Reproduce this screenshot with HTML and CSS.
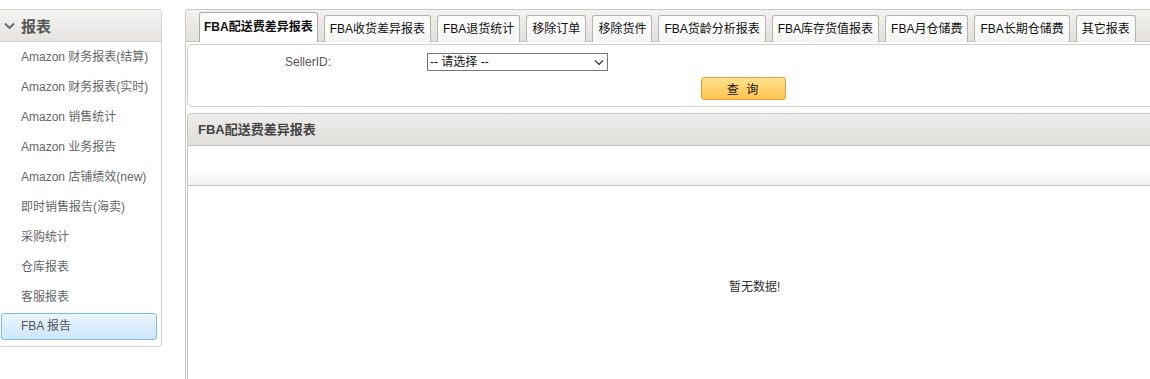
FILE: index.html
```html
<!DOCTYPE html>
<html lang="zh-CN">
<head>
    <meta charset="UTF-8">
    <meta name="viewport" content="width=device-width, initial-scale=1.0">
    <title>FBA 报告</title>
    <link rel="stylesheet" href="styles.css">
</head>
<body>
    <div class="page">
        <div class="sidebar">
            <div class="side-head">
                <svg class="chev" width="11" height="8" viewBox="0 0 11 8"><path d="M1 1.5 L5.5 6 L10 1.5" fill="none" stroke="#666" stroke-width="1.8"/></svg>
                <span>报表</span>
            </div>
            <ul class="side-menu">
                <li>Amazon 财务报表(结算)</li>
                <li>Amazon 财务报表(实时)</li>
                <li>Amazon 销售统计</li>
                <li>Amazon 业务报告</li>
                <li>Amazon 店铺绩效(new)</li>
                <li>即时销售报告(海卖)</li>
                <li>采购统计</li>
                <li>仓库报表</li>
                <li>客服报表</li>
                <li class="active">FBA 报告</li>
            </ul>
        </div>

        <div class="main">
            <div class="tabs">
                <div class="tab active">FBA配送费差异报表</div>
                <div class="tab">FBA收货差异报表</div>
                <div class="tab">FBA退货统计</div>
                <div class="tab">移除订单</div>
                <div class="tab">移除货件</div>
                <div class="tab">FBA货龄分析报表</div>
                <div class="tab">FBA库存货值报表</div>
                <div class="tab">FBA月仓储费</div>
                <div class="tab">FBA长期仓储费</div>
                <div class="tab">其它报表</div>
            </div>

            <div class="body">
                <div class="search">
                    <div class="search-row">
                        <label for="seller">SellerID:</label>
                        <div class="select-wrap">
                            <select id="seller">
                                <option>-- 请选择 --</option>
                            </select>
                            <svg class="select-arrow" width="10" height="7" viewBox="0 0 10 7"><path d="M1 1.5 L5 5.5 L9 1.5" fill="none" stroke="#333" stroke-width="1.2"/></svg>
                        </div>
                    </div>
                    <div class="search-btn">
                        <button>查 询</button>
                    </div>
                </div>

                <div class="list">
                    <div class="list-head">FBA配送费差异报表</div>
                    <div class="list-cols"></div>
                    <div class="empty">暂无数据!</div>
                </div>
            </div>
        </div>
    </div>
</body>
</html>
```

FILE: styles.css
```css
html, body {
    margin: 0;
    padding: 0;
    height: 100%;
    overflow: hidden;
}

body {
    font-family: "Liberation Sans", "Noto Sans CJK SC", sans-serif;
    font-size: 12px;
    color: #333;
    background-color: #fff;
}

.page {
    display: flex;
    align-items: flex-start;
    height: 100%;
}

/* sidebar */
.sidebar {
    flex: none;
    width: 161px;
    margin-top: 9px;
    border: 1px solid #d4d4d0;
    border-left: none;
    border-radius: 0 4px 4px 0;
    padding-bottom: 4px;
}

.side-head {
    display: flex;
    align-items: center;
    height: 31px;
    padding-left: 4px;
    background: linear-gradient(#f5f5f3, #e4e3df);
    border-bottom: 1px solid #d4d4d0;
    border-radius: 0 4px 0 0;
    font-size: 15px;
    font-weight: bold;
    color: #555;
}

.side-head .chev {
    margin-right: 6px;
}

.side-menu {
    list-style: none;
    margin: 0;
    padding: 0;
}

.side-menu li {
    height: 30px;
    line-height: 30px;
    padding-left: 21px;
    color: #666;
    font-size: 12px;
}

.side-menu li.active {
    height: 25px;
    line-height: 25px;
    margin: 1px 4px 2px 1px;
    padding-left: 19px;
    border: 1px solid #7cbbe4;
    border-radius: 3px;
    background: linear-gradient(#eaf5fe, #cde7fb);
    color: #555;
}

/* main panel */
.main {
    flex: none;
    width: 1000px;
    height: calc(100% - 9px);
    margin-top: 9px;
    margin-left: 23px;
    border: 1px solid #c8c8c4;
    border-bottom: none;
    border-radius: 4px 0 0 0;
    display: flex;
    flex-direction: column;
}

.tabs {
    display: flex;
    align-items: flex-end;
    gap: 6px;
    height: 31px;
    padding-left: 13px;
    background: linear-gradient(#f3f2f0, #e1e0dc);
    border-bottom: 1px solid #c8c8c4;
    border-radius: 4px 0 0 0;
}

.tab {
    height: 26px;
    line-height: 26px;
    padding: 0 5px;
    margin-bottom: -1px;
    border: 1px solid #b4b4b0;
    border-bottom: none;
    border-radius: 3px 3px 0 0;
    background: linear-gradient(#ffffff, #f4f4f2);
    color: #111;
    white-space: nowrap;
}

.tab.active {
    height: 29px;
    line-height: 29px;
    padding: 0 4px;
    font-weight: bold;
    background: #fff;
    border-color: #aaa;
}

.body {
    flex: 1;
    padding: 2px 0 0 1px;
    display: flex;
    flex-direction: column;
    gap: 6px;
}

.search {
    height: 61px;
    border: 1px solid #cfcfcb;
    border-radius: 5px 0 0 5px;
    background-color: #fff;
}

.search-row {
    display: flex;
    align-items: center;
    height: 30px;
    padding-top: 2px;
}

.search-row label {
    width: 143px;
    text-align: right;
    color: #555;
    font-size: 12px;
}

.select-wrap {
    position: relative;
    margin-left: 96px;
    height: 18px;
}

.select-wrap select {
    appearance: none;
    -webkit-appearance: none;
    display: block;
    width: 181px;
    height: 18px;
    padding: 0 0 0 2px;
    border: 1px solid #777;
    border-radius: 0;
    background-color: #fff;
    font-family: inherit;
    font-size: 12px;
    color: #111;
}

.select-arrow {
    position: absolute;
    right: 4px;
    top: 6px;
    pointer-events: none;
}

.search-btn {
    padding-left: 513px;
}

.search-btn button {
    width: 85px;
    height: 23px;
    border: 1px solid #dba33a;
    border-radius: 3px;
    background: linear-gradient(#ffe18f, #ffc450);
    font-family: inherit;
    font-size: 12px;
    color: #111;
    letter-spacing: 2px;
    cursor: pointer;
}

.list {
    flex: 1;
    border: 1px solid #c8c8c4;
    border-bottom: none;
    border-radius: 4px 0 0 0;
    display: flex;
    flex-direction: column;
}

.list-head {
    height: 31px;
    line-height: 31px;
    padding-left: 10px;
    background: linear-gradient(#eeedeb, #dfdeda);
    border-bottom: 1px solid #c4c4c0;
    border-radius: 4px 0 0 0;
    font-size: 13px;
    font-weight: bold;
    color: #444;
}

.list-cols {
    height: 39px;
    background: linear-gradient(#fff 55%, #f1f1f0);
    border-bottom: 1px solid #c4c4c0;
}

.empty {
    padding-top: 91px;
    padding-left: 541px;
    width: 0;
    white-space: nowrap;
    color: #333;
    font-size: 12px;
}
```
